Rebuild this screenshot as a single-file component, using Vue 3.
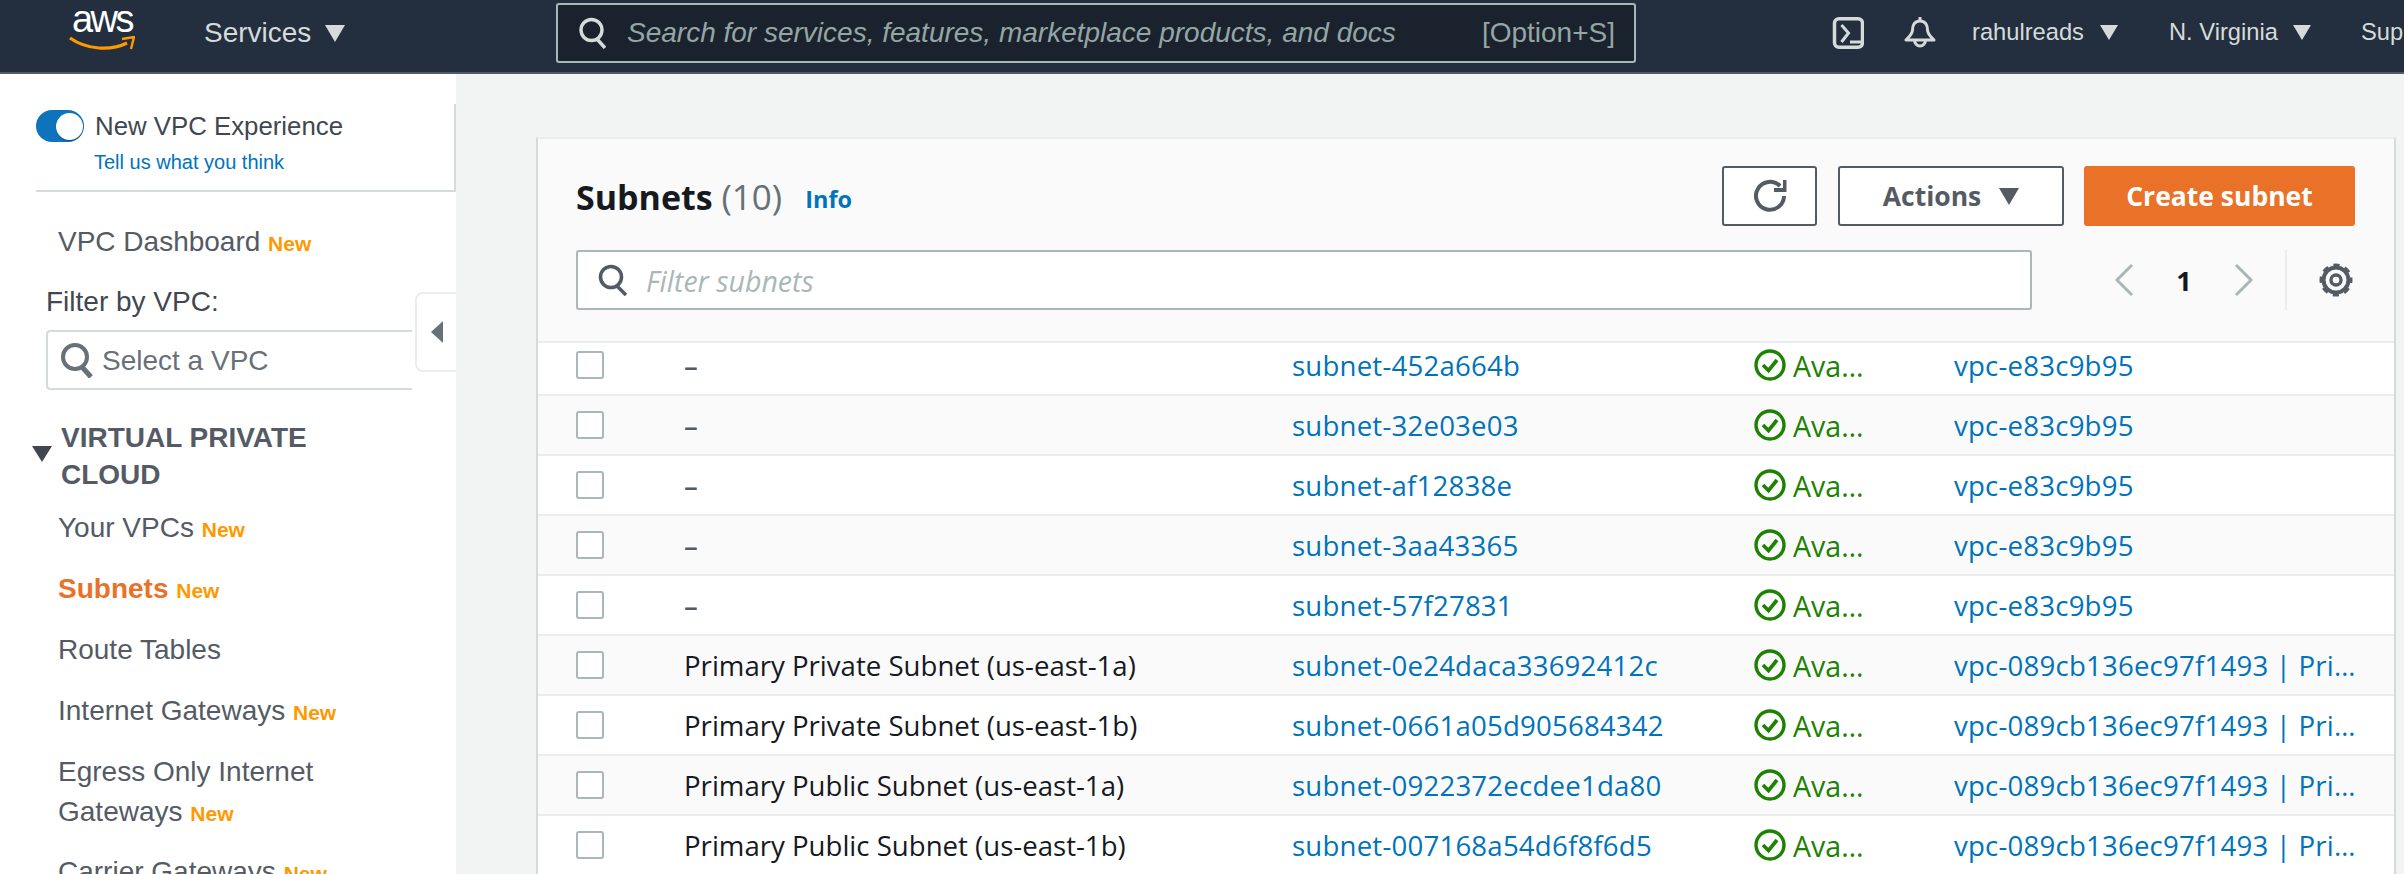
<script setup>
const navItems = [
  { label: 'Your VPCs', isNew: true },
  { label: 'Subnets', isNew: true, active: true },
  { label: 'Route Tables' },
  { label: 'Internet Gateways', isNew: true },
  { label: 'Egress Only Internet Gateways', isNew: true, wide: true },
  { label: 'Carrier Gateways', isNew: true },
];

const oldVpc = 'vpc-e83c9b95';
const newVpc = 'vpc-089cb136ec97f1493 | Primary VPC';

const rows = [
  { name: '–', id: 'subnet-452a664b', vpc: oldVpc },
  { name: '–', id: 'subnet-32e03e03', vpc: oldVpc },
  { name: '–', id: 'subnet-af12838e', vpc: oldVpc },
  { name: '–', id: 'subnet-3aa43365', vpc: oldVpc },
  { name: '–', id: 'subnet-57f27831', vpc: oldVpc },
  { name: 'Primary Private Subnet (us-east-1a)', id: 'subnet-0e24daca33692412c', vpc: newVpc },
  { name: 'Primary Private Subnet (us-east-1b)', id: 'subnet-0661a05d905684342', vpc: newVpc },
  { name: 'Primary Public Subnet (us-east-1a)', id: 'subnet-0922372ecdee1da80', vpc: newVpc },
  { name: 'Primary Public Subnet (us-east-1b)', id: 'subnet-007168a54d6f8f6d5', vpc: newVpc },
];
</script>

<template>
  <div class="page">
    <header class="topbar">
      <div class="logo">
        <span class="logo-text">aws</span>
        <svg class="logo-smile" viewBox="0 0 66 16" width="66" height="16">
          <path d="M1 2 C 18 14, 42 15, 58 7" fill="none" stroke="#f90" stroke-width="3.2" />
          <path d="M53 3 L65 1 L62 13" fill="none" stroke="#f90" stroke-width="2.4" />
        </svg>
      </div>
      <div class="services">Services <span class="tri tri-light"></span></div>
      <div class="topsearch">
        <svg width="28" height="32" viewBox="0 0 28 32" fill="none" stroke="#d5dbdb" stroke-width="3.4">
          <circle cx="12.5" cy="13" r="10.5" />
          <path d="M18 22 L26 31" />
        </svg>
        <span class="topsearch-text">Search for services, features, marketplace products, and docs</span>
        <span class="topsearch-key">[Option+S]</span>
      </div>
      <svg class="term" width="32" height="32" viewBox="0 0 32 32" fill="none" stroke="#d5dbdb">
        <rect x="2.5" y="1.75" width="28" height="28.5" rx="4.5" stroke-width="3.5" />
        <path d="M9.5 8 L16.5 16 L9.5 25" stroke-width="3" />
        <path d="M18 25 H31" stroke-width="3" />
      </svg>
      <svg class="bell" width="32" height="32" viewBox="0 0 32 32" fill="none" stroke="#d5dbdb" stroke-width="3">
        <path d="M16 0 V4 C 10 4 8.5 9 8.5 13 C 8.5 17 5 20 2 23 H30 C 27 20 23.5 17 23.5 13 C 23.5 9 22 4 16 4" stroke-linejoin="round" />
        <path d="M10.5 23 A5.5 6 0 0 0 21.5 23" />
      </svg>
      <div class="topmenu user">rahulreads <span class="tri tri-small"></span></div>
      <div class="topmenu region">N. Virginia <span class="tri tri-small"></span></div>
      <div class="topmenu support">Support</div>
    </header>

    <div class="body">
      <aside class="sidebar">
        <div class="experience">
          <div class="toggle-row">
            <span class="toggle"><span class="knob"></span></span>
            <span class="toggle-label">New VPC Experience</span>
          </div>
          <a class="feedback">Tell us what you think</a>
        </div>

        <div class="dash">VPC Dashboard <span class="new">New</span></div>
        <div class="filter-label">Filter by VPC:</div>
        <div class="vpc-select">
          <svg width="34" height="36" viewBox="0 0 34 36" fill="none" stroke="#687078" stroke-width="4">
            <circle cx="15" cy="15" r="12" />
            <path d="M22 25 L31 35" stroke-width="5" />
          </svg>
          <span class="vpc-select-text">Select a VPC</span>
        </div>

        <div class="section">
          <span class="section-tri"></span>
          <span class="section-title">VIRTUAL PRIVATE CLOUD</span>
        </div>
        <nav class="nav">
          <div
            v-for="item in navItems"
            :key="item.label"
            class="nav-item"
            :class="{ active: item.active, wide: item.wide }"
          >
            {{ item.label }} <span v-if="item.isNew" class="new">New</span>
          </div>
        </nav>

        <div class="collapse"><span class="collapse-tri"></span></div>
      </aside>

      <main class="content">
        <section class="panel">
          <div class="panel-head">
            <div class="title-row">
              <h1 class="title">Subnets <span class="count">(10)</span></h1>
              <a class="info">Info</a>
              <button class="btn refresh">
                <svg width="34" height="34" viewBox="0 0 34 34" fill="none" stroke="#545b64" stroke-width="4">
                  <path d="M27 7 A14 14 0 1 0 31 17" />
                  <path d="M21 9 H30 V1 H33.5 V13 H21 Z" fill="#545b64" stroke="none" />
                </svg>
              </button>
              <button class="btn actions">Actions <span class="tri tri-dark"></span></button>
              <button class="btn create">Create subnet</button>
            </div>
            <div class="filter-row">
              <div class="filter">
                <svg width="30" height="32" viewBox="0 0 30 32" fill="none" stroke="#545b64" stroke-width="3.6">
                  <circle cx="13" cy="13" r="10.5" />
                  <path d="M19 22 L28 31" />
                </svg>
                <span class="filter-text">Filter subnets</span>
              </div>
              <div class="pager">
                <svg width="20" height="32" viewBox="0 0 20 32" fill="none" stroke="#aab7b8" stroke-width="3">
                  <path d="M18 1 L3 16 L18 31" />
                </svg>
                <span class="page-num">1</span>
                <svg width="20" height="32" viewBox="0 0 20 32" fill="none" stroke="#aab7b8" stroke-width="3">
                  <path d="M2 1 L17 16 L2 31" />
                </svg>
                <span class="pager-sep"></span>
                <svg class="gear" width="34" height="34" viewBox="0 0 34 34" fill="none" stroke="#545b64">
                  <circle cx="17" cy="17" r="12.5" stroke-width="4" />
                  <circle cx="17" cy="17" r="14.5" stroke-width="4" stroke-dasharray="6 5.39" stroke-dashoffset="3" />
                  <circle cx="17" cy="17" r="5" stroke-width="3.4" />
                </svg>
              </div>
            </div>
          </div>

          <div class="table">
            <div v-for="row in rows" :key="row.id" class="row">
              <span class="check"></span>
              <span class="cell-name" :class="{ empty: row.name === '–' }">{{ row.name }}</span>
              <a class="cell-id">{{ row.id }}</a>
              <span class="cell-status">
                <svg width="32" height="32" viewBox="0 0 32 32" fill="none" stroke="#1d8102">
                  <circle cx="16" cy="16" r="14" stroke-width="3.4" />
                  <path d="M9 16 L14.5 21.5 L23 11" stroke-width="3.6" />
                </svg>
                <span class="status-text">Available</span>
              </span>
              <a class="cell-vpc">{{ row.vpc }}</a>
            </div>
          </div>
        </section>
      </main>
    </div>
  </div>
</template>

<style>
html, body {
  margin: 0;
  overflow: hidden;
}
</style>

<style scoped>
.page {
  width: 2404px;
  height: 874px;
  overflow: hidden;
  display: flex;
  flex-direction: column;
  font-family: "Liberation Sans", Arial, sans-serif;
  background: #f2f3f3;
}

/* top bar */
.topbar {
  flex: none;
  box-sizing: border-box;
  height: 74px;
  padding-bottom: 7px;
  display: flex;
  align-items: center;
  background: #232f3e;
  border-bottom: 2px solid #545b64;
  color: #d5dbdb;
  white-space: nowrap;
  overflow: hidden;
}
.topbar > * {
  flex: none;
}
.logo {
  width: 66px;
  margin-left: 69px;
  padding-bottom: 5px;
  display: flex;
  flex-direction: column;
  align-items: center;
}
.logo-text {
  color: #fff;
  font-size: 38px;
  line-height: 22px;
  height: 22px;
  letter-spacing: -2.5px;
}
.logo-smile {
  display: block;
  margin-top: 6px;
}
.services {
  margin-left: 69px;
  width: 352px;
  font-size: 28px;
}
.tri {
  display: inline-block;
  width: 0;
  height: 0;
  border-left: 10px solid transparent;
  border-right: 10px solid transparent;
  border-top: 17px solid #d5dbdb;
  margin-left: 6px;
}
.tri-small {
  border-left-width: 9px;
  border-right-width: 9px;
  border-top-width: 15px;
  margin-left: 9px;
}
.tri-dark {
  border-top-color: #545b64;
  margin-left: 18px;
}
.topsearch {
  box-sizing: border-box;
  width: 1080px;
  height: 60px;
  padding: 0 19px 0 21px;
  display: flex;
  align-items: center;
  background: #1a222d;
  border: 2px solid #aab7b8;
  border-radius: 3px;
  color: #95a5a6;
  font-size: 28px;
}
.topsearch-text {
  margin-left: 20px;
  font-style: italic;
  flex: 1;
}
.term {
  margin-left: 196px;
}
.bell {
  margin-left: 40px;
}
.topmenu {
  font-size: 23.7px;
}
.user {
  margin-left: 36px;
  width: 197px;
}
.region {
  width: 192px;
}

.body {
  flex: 1;
  display: flex;
  min-height: 0;
}

/* left nav */
.sidebar {
  position: relative;
  flex: none;
  width: 456px;
  box-sizing: border-box;
  padding-top: 30px;
  background: #fff;
  color: #545b64;
}
.experience {
  box-sizing: border-box;
  height: 88px;
  margin-left: 36px;
  padding-top: 6px;
  border-right: 2px solid #d5dbdb;
  border-bottom: 2px solid #d5dbdb;
}
.toggle-row {
  display: flex;
  align-items: center;
}
.toggle {
  box-sizing: border-box;
  width: 48px;
  height: 32px;
  padding-right: 1px;
  display: flex;
  align-items: center;
  justify-content: flex-end;
  background: #0f73bb;
  border-radius: 16px;
}
.knob {
  width: 27px;
  height: 27px;
  background: #fff;
  border-radius: 50%;
  box-shadow: 0 1px 1px #0b4f80;
}
.toggle-label {
  margin-left: 11px;
  font-size: 25.8px;
  color: #414750;
}
.feedback {
  display: block;
  margin: 9px 0 0 58px;
  font-size: 20px;
  color: #0073bb;
}
.dash {
  margin: 33px 0 0 58px;
  font-size: 28px;
  line-height: 34px;
}
.new {
  color: #ff9900;
  font-weight: bold;
  font-size: 21px;
}
.filter-label {
  margin: 24px 0 0 46px;
  font-size: 28px;
  line-height: 34px;
  color: #414750;
}
.vpc-select {
  box-sizing: border-box;
  width: 366px;
  height: 60px;
  margin: 11px 0 0 46px;
  padding-left: 12px;
  display: flex;
  align-items: center;
  gap: 8px;
  border: 2px solid #d5dbdb;
  border-right: 0;
  border-radius: 4px 0 0 4px;
  font-size: 28px;
  color: #687078;
}
.vpc-select-text {
  margin-top: 2px;
}
.section {
  display: flex;
  margin: 29px 0 0 32px;
}
.section-tri {
  flex: none;
  width: 0;
  height: 0;
  margin-top: 27px;
  border-left: 10px solid transparent;
  border-right: 10px solid transparent;
  border-top: 16px solid #414750;
}
.section-title {
  margin-left: 9px;
  width: 320px;
  font-size: 28px;
  font-weight: bold;
  line-height: 37px;
}
.nav {
  margin-top: 2px;
}
.nav-item {
  box-sizing: border-box;
  width: 330px;
  margin-left: 58px;
  min-height: 61px;
  padding-top: 13px;
  font-size: 28px;
  line-height: 40px;
}
.nav-item.active {
  color: #ea7228;
  font-weight: bold;
}
.nav-item.wide {
  min-height: 100px;
}
.collapse {
  position: absolute;
  top: 218px;
  left: 415px;
  box-sizing: border-box;
  width: 41px;
  height: 80px;
  display: flex;
  align-items: center;
  padding-left: 14px;
  background: #fff;
  border: 2px solid #eaeded;
  border-right: 0;
  border-radius: 8px 0 0 8px;
}
.collapse-tri {
  width: 0;
  height: 0;
  border-top: 11px solid transparent;
  border-bottom: 11px solid transparent;
  border-right: 12px solid #687078;
}

/* main panel */
.content {
  flex: 1;
  min-width: 0;
  padding: 63px 8px 0 80px;
}
.panel {
  font-family: "Open Sans", "Noto Sans", sans-serif;
  background: #fafafa;
  border-top: 2px solid #eaeded;
  border-left: 2px solid #d5dbdb;
  border-right: 2px solid #d5dbdb;
}
.panel-head {
  box-sizing: border-box;
  height: 202px;
  padding: 27px 39px 0 38px;
}
.title-row {
  display: flex;
  align-items: center;
  height: 60px;
}
.title {
  margin: 0;
  font-size: 34px;
  font-weight: 700;
  color: #16191f;
}
.count {
  font-size: 35px;
  font-weight: 400;
  color: #687078;
}
.info {
  margin: 6px auto 0 23px;
  font-size: 23.5px;
  font-weight: 700;
  color: #0073bb;
}
.btn {
  box-sizing: border-box;
  height: 60px;
  display: flex;
  align-items: center;
  justify-content: center;
  font-family: inherit;
  font-size: 26.5px;
  font-weight: 700;
  border-radius: 3px;
  background: #fff;
  color: #545b64;
  border: 2px solid #545b64;
  padding: 0;
}
.refresh {
  width: 95px;
}
.actions {
  width: 226px;
  margin-left: 21px;
}
.create {
  width: 271px;
  margin-left: 20px;
  background: #ea7228;
  border-color: #ea7228;
  color: #fff;
}
.filter-row {
  display: flex;
  align-items: center;
  margin-top: 24px;
}
.filter {
  flex: none;
  box-sizing: border-box;
  width: 1456px;
  height: 60px;
  padding-left: 20px;
  display: flex;
  align-items: center;
  background: #fff;
  border: 2px solid #aab7b8;
  border-radius: 3px;
}
.filter-text {
  margin: 2px 0 0 18px;
  font-size: 28.5px;
  font-style: italic;
  color: #aab7b8;
}
.pager {
  flex: 1;
  height: 60px;
  display: flex;
  align-items: center;
  padding-left: 82px;
}
.page-num {
  width: 100px;
  text-align: center;
  font-size: 27px;
  font-weight: 700;
  color: #16191f;
}
.pager-sep {
  width: 2px;
  height: 60px;
  margin-left: 31px;
  background: #eaeded;
}
.gear {
  margin-left: 32px;
}

/* table */
.table {
  border-top: 2px solid #eaeded;
  overflow: hidden;
  height: 600px;
  background: #fff;
}
.row {
  box-sizing: border-box;
  height: 60px;
  display: flex;
  align-items: center;
  padding-left: 38px;
  border-bottom: 2px solid #eaeded;
  font-size: 27.6px;
  color: #16191f;
  background: #fafafa;
  white-space: nowrap;
}
.row:nth-child(odd) {
  background: #fff;
}
.row:first-child {
  margin-top: -7px;
}
.check {
  flex: none;
  box-sizing: border-box;
  width: 28px;
  height: 28px;
  background: #fff;
  border: 2px solid #aab7b8;
  border-radius: 3px;
}
.cell-name {
  flex: none;
  width: 608px;
  margin-left: 80px;
}
.cell-name.empty {
  color: #545b64;
  font-weight: 600;
}
.cell-id {
  flex: none;
  width: 462px;
  color: #0073bb;
  letter-spacing: 0.2px;
}
.cell-status {
  flex: none;
  width: 200px;
  display: flex;
  align-items: center;
  color: #1d8102;
}
.status-text {
  width: 73px;
  margin-left: 7px;
  font-size: 28.6px;
  overflow: hidden;
  text-overflow: ellipsis;
}
.cell-vpc {
  flex: none;
  width: 402px;
  overflow: hidden;
  text-overflow: ellipsis;
  color: #0073bb;
  letter-spacing: 0.2px;
}
</style>
